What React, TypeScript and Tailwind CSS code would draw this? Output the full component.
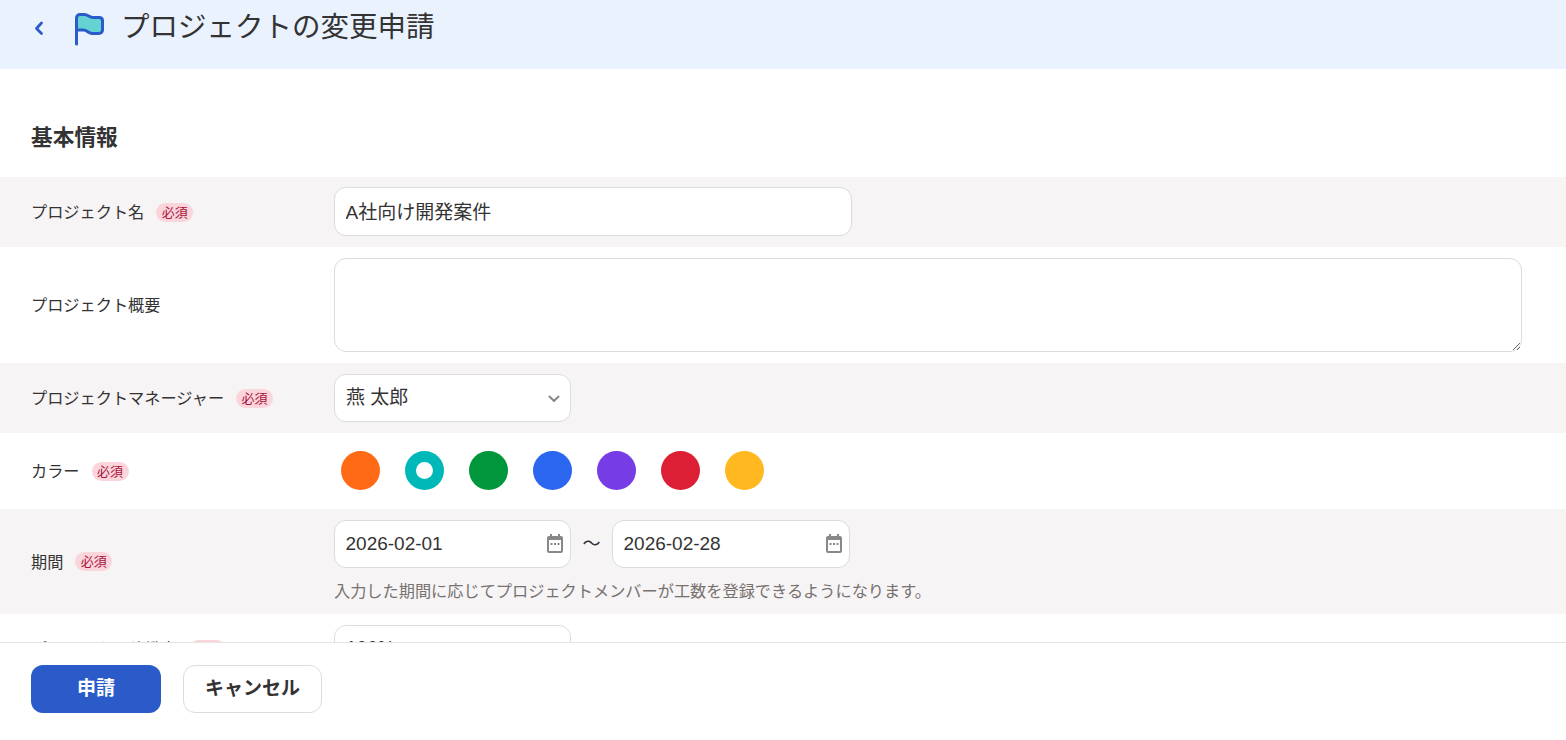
const sans = "font-['Liberation_Sans','Noto_Sans_CJK_JP',sans-serif]";

function Required() {
  return (
    <span className="ml-[12px] inline-flex h-[19px] w-[37px] items-center justify-center rounded-full bg-[#fbd5dc] text-[13px] text-[#a8123a]">
      必須
    </span>
  );
}

function Label({ text, required }: { text: string; required?: boolean }) {
  return (
    <div className="flex w-[303px] shrink-0 items-center pt-px text-[16.2px] text-[#333]">
      <span>{text}</span>
      {required ? <Required /> : null}
    </div>
  );
}

function Chevron() {
  return (
    <svg width="12" height="8" viewBox="0 0 12 8" fill="none" stroke="#888" strokeWidth="2" strokeLinecap="round" strokeLinejoin="round" className="pointer-events-none absolute right-[10px] top-[20px]">
      <path d="M1.500 1.500L6 6l4.500-4.500" />
    </svg>
  );
}

function CalendarIcon() {
  return (
    <svg width="16" height="19" viewBox="0 0 16 19" className="pointer-events-none absolute right-[8px] top-[14px]">
      <path d="M3 0h2v2h6V0h2v2h1a2 2 0 0 1 2 2v13a2 2 0 0 1-2 2H2a2 2 0 0 1-2-2V4a2 2 0 0 1 2-2h1z" fill="#888" />
      <rect x="2" y="6" width="12" height="11" fill="#fff" />
      <rect x="3.500" y="9" width="2" height="2" fill="#888" />
      <rect x="7" y="9" width="2" height="2" fill="#888" />
      <rect x="10.500" y="9" width="2" height="2" fill="#888" />
    </svg>
  );
}

function DateField({ value, width }: { value: string; width: string }) {
  return (
    <div className={`relative ${width}`}>
      <input
        readOnly
        value={value}
        className="h-[48px] w-full rounded-[12px] border border-[#dcdcdc] bg-white px-[10.500px] text-[19px] text-[#333] outline-none"
      />
      <CalendarIcon />
    </div>
  );
}

function FlagIcon() {
  return (
    <svg width="30" height="34" viewBox="0 0 30 34" fill="none" strokeLinejoin="round" strokeLinecap="round">
      <path d="M2.500 18V6c0-2 1.500-3.500 3.500-3.500h4.500c3.500 0 5 3 8.500 3h6c2 0 3.500 1 3.500 3V18c0 2-1.500 3.500-3.500 3.500H18c-3.500 0-5-3.500-8.500-3.500z" fill="#66d3d3" />
      <path d="M2.500 32V6c0-2 1.500-3.500 3.500-3.500h4.500c3.500 0 5 3 8.500 3h6c2 0 3.500 1 3.500 3V18c0 2-1.500 3.500-3.500 3.500H18c-3.500 0-5-3.500-8.500-3.500h-7" stroke="#2a5bc8" strokeWidth="3" />
    </svg>
  );
}

const colors = [
  { hex: "bg-[#ff6a17]" },
  { hex: "bg-[#00b8b8]", selected: true },
  { hex: "bg-[#00963c]" },
  { hex: "bg-[#2b66f0]" },
  { hex: "bg-[#763ce6]" },
  { hex: "bg-[#dc1f35]" },
  { hex: "bg-[#ffb81f]" },
];

export default function App() {
  return (
    <div className={`flex h-[740px] w-full flex-col overflow-hidden bg-white text-[#333] ${sans}`}>
      <main className="min-h-0 flex-1 overflow-hidden">
        <header className="flex h-[69px] items-start bg-[#eaf2fe] pl-[34px] pt-[11px]">
          <svg width="10" height="15" viewBox="0 0 10 15" fill="none" stroke="#2a5bc8" strokeWidth="2.800" strokeLinecap="round" strokeLinejoin="round" className="mt-[10px]">
            <path d="M7.500 2L2.500 7.500l5 5" />
          </svg>
          <div className="ml-[30px] mt-px">
            <FlagIcon />
          </div>
          <h1 className="ml-[17px] -mt-px text-[28.500px] leading-[34px] font-normal text-[#333]">プロジェクトの変更申請</h1>
        </header>

        <h2 className="pl-[31px] pt-[55px] pb-[25px] text-[21.700px] leading-[28px] font-bold text-[#333]">基本情報</h2>

        <div className="flex h-[70px] items-center bg-[#f6f4f5] pl-[31px]">
          <Label text="プロジェクト名" required />
          <input
            readOnly
            value="A社向け開発案件"
            className="-mt-px h-[49px] w-[518px] rounded-[12px] border border-[#dcdcdc] bg-white px-[10.500px] pb-[2px] text-[19px] text-[#333] outline-none"
          />
        </div>

        <div className="flex h-[116px] items-center pl-[31px]">
          <Label text="プロジェクト概要" />
          <textarea readOnly className="block h-[94px] w-[1188px] rounded-[12px] border border-[#dcdcdc] bg-white outline-none" />
        </div>

        <div className="flex h-[70px] items-center bg-[#f6f4f5] pl-[31px]">
          <Label text="プロジェクトマネージャー" required />
          <div className="relative h-[48px] w-[237px] rounded-[12px] border border-[#dcdcdc] bg-white pl-[11px] text-[19px] leading-[45px] text-[#333]">
            燕 太郎
            <Chevron />
          </div>
        </div>

        <div className="flex h-[76px] items-center pl-[31px]">
          <Label text="カラー" required />
          <div className="-mt-px flex gap-[25px] pl-[7px]">
            {colors.map((c) => (
              <div key={c.hex} className={`flex h-[39px] w-[39px] items-center justify-center rounded-full ${c.hex}`}>
                {c.selected ? <div className="h-[17px] w-[17px] rounded-full bg-white" /> : null}
              </div>
            ))}
          </div>
        </div>

        <div className="flex h-[105px] items-center bg-[#f6f4f5] pl-[31px]">
          <Label text="期間" required />
          <div className="-mt-px flex flex-col gap-[12px]">
            <div className="flex items-center">
              <DateField value="2026-02-01" width="w-[237px]" />
              <span className="w-[41px] text-center text-[18px] text-[#333]">〜</span>
              <DateField value="2026-02-28" width="w-[238px]" />
            </div>
            <p className="text-[16.200px] leading-[22px] text-[#77716f]">
              入力した期間に応じてプロジェクトメンバーが工数を登録できるようになります。
            </p>
          </div>
        </div>

        <div className="flex h-[70px] items-center pl-[31px]">
          <Label text="プロジェクト稼働率" required />
          <div className="relative h-[48px] w-[237px] rounded-[12px] border border-[#dcdcdc] bg-white pl-[11px] text-[19px] leading-[43px] text-[#333]">
            100%
            <Chevron />
          </div>
        </div>
      </main>

      <footer className="flex h-[98px] shrink-0 items-start gap-[22px] border-t border-[#e4e4e4] bg-white pl-[31px] pt-[22px]">
        <button className="h-[48px] w-[130px] rounded-[12px] bg-[#2a5bc8] text-[19px] font-bold text-white">申請</button>
        <button className="h-[48px] w-[139px] rounded-[12px] border border-[#dcdcdc] bg-white text-[19px] font-bold text-[#333]">キャンセル</button>
      </footer>
    </div>
  );
}
